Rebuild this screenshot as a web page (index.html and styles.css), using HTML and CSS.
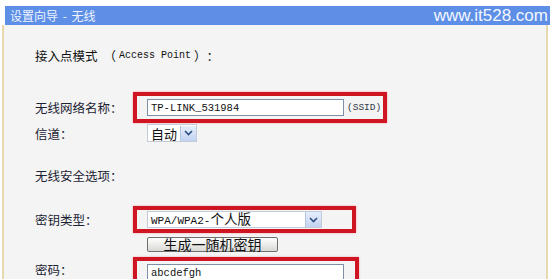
FILE: index.html
```html
<!DOCTYPE html>
<html lang="zh-CN">
<head>
  <meta charset="UTF-8">
  <title>设置向导 - 无线</title>
  <link rel="stylesheet" href="styles.css">
</head>
<body>
  <div class="wizard">
    <!-- 标题栏 -->
    <div class="title-bar">
      <span class="title">设置向导 - 无线</span>
      <span class="site">www.it528.com</span>
    </div>

    <!-- 表单 -->
    <div class="panel">
      <div class="row mode">接入点模式 <span class="paren">（</span><span class="mono">Access Point</span><span class="paren">）</span>：</div>

      <div class="row ssid">
        <span class="label">无线网络名称：</span>
        <span class="mark mark-ssid">
          <input class="text" type="text" value="TP-LINK_531984">
          <span class="hint">(SSID)</span>
        </span>
      </div>

      <div class="row channel">
        <span class="label">信道：</span>
        <div class="select select-channel">
          <span class="value">自动</span>
          <span class="arrow"><svg width="9" height="6" viewBox="0 0 9 6"><path d="M1 1 L4.5 4.5 L8 1" fill="none" stroke="#2d4f86" stroke-width="1.6"/></svg></span>
        </div>
      </div>

      <div class="row security">
        <span class="label">无线安全选项：</span>
      </div>

      <div class="row keytype">
        <span class="label">密钥类型：</span>
        <span class="mark mark-key">
          <div class="select select-key">
            <span class="value"><span class="mono">WPA/WPA2-</span>个人版</span>
            <span class="arrow"><svg width="9" height="6" viewBox="0 0 9 6"><path d="M1 1 L4.5 4.5 L8 1" fill="none" stroke="#2d4f86" stroke-width="1.6"/></svg></span>
          </div>
        </span>
      </div>

      <div class="row gen">
        <span class="label"></span>
        <button class="btn">生成一随机密钥</button>
      </div>

      <div class="row password">
        <span class="label">密码：</span>
        <span class="mark mark-pass">
          <input class="text" type="text" value="abcdefgh">
        </span>
      </div>
    </div>
  </div>
</body>
</html>
```

FILE: styles.css
```css
body {
  margin: 0;
  background: #ffffff;
  font-family: "Noto Sans CJK SC", "Liberation Sans", sans-serif;
  color: #1c2333;
  overflow: hidden;
}

.wizard {
  padding-top: 6px;
}

.title-bar {
  height: 19px;
  margin-left: 5px;
  margin-right: 2px;
  background: #5d8fe6;
  color: #ffffff;
  display: flex;
  align-items: center;
  justify-content: space-between;
}

.title {
  font-size: 12px;
  padding-left: 5px;
  color: #eef3ff;
  word-spacing: 2px;
}

.site {
  font-family: "Liberation Sans", sans-serif;
  font-size: 17px;
  padding-right: 2px;
  color: #f4f7ff;
}

.panel {
  margin-left: 2px;
  width: 511px;
  height: 254px;
  padding-left: 31px;
  background: #f4f4f4;
  border-left: 2px solid #e6d9ad;
  border-right: 2px solid #e6d9ad;
}

.row {
  display: flex;
  align-items: center;
  font-size: 12.5px;
}

.label {
  width: 112px;
  flex: none;
}

.mono {
  font-family: "Liberation Mono", monospace;
  font-size: 10px;
}

.mode {
  height: 20px;
  padding-top: 20px;
  color: #111111;
}

.mode .paren {
  margin: 0 3px 0 6px;
}

.mode .paren + .mono + .paren {
  margin: 0 0 0 3px;
}

.mark {
  display: flex;
  align-items: center;
  margin-left: -14px;
  border: 4px solid #cf1422;
  box-shadow: 0 0 2px #f3a3a8;
}

.ssid {
  margin-top: 27px;
}

.mark-ssid {
  padding: 3px 2px 3px 10px;
}

.mark-key {
  padding: 1px 30px 1px 10px;
}

.mark-pass {
  padding: 3px 11px 3px 10px;
}

.text {
  box-sizing: border-box;
  width: 197px;
  height: 17px;
  margin: 0;
  padding: 0 3px;
  border: 1px solid #7f8fa8;
  background: #ffffff;
  font-family: "Liberation Mono", monospace;
  font-size: 10.5px;
  color: #111111;
}

.hint {
  margin-left: 3px;
  font-family: "Liberation Mono", monospace;
  font-size: 9.5px;
  color: #333a48;
}

.channel {
  height: 20px;
}

.select {
  box-sizing: border-box;
  display: flex;
  align-items: center;
  height: 17px;
  background: #ffffff;
  border: 1px solid #c3cbd8;
  font-size: 13px;
  color: #111111;
}

.select .value {
  flex: 1;
  padding-left: 3px;
  line-height: 15px;
}

.select .arrow {
  width: 15px;
  height: 15px;
  display: flex;
  align-items: center;
  justify-content: center;
  background: linear-gradient(#e6eefc, #c2d3f1);
  border-left: 1px solid #b4c4de;
}

.select-channel {
  width: 50px;
  height: 18px;
}

.select-key {
  width: 175px;
  font-size: 13.5px;
}

.select-key .mono {
  font-size: 11px;
}

.security {
  height: 20px;
  margin-top: 22px;
}

.keytype {
  margin-top: 21px;
}

.gen {
  margin-top: 4px;
}

.btn {
  box-sizing: border-box;
  width: 131px;
  height: 15px;
  margin: 0;
  padding: 0;
  border: 1px solid #6f6f6f;
  border-radius: 2px;
  background: linear-gradient(#ffffff, #d8d8d4);
  font-family: "Noto Sans CJK SC", sans-serif;
  font-size: 14px;
  line-height: 13px;
  color: #111111;
}

.password {
  margin-top: 5px;
  align-items: flex-start;
}

.password .label {
  margin-top: 6px;
  line-height: 14px;
}
```
